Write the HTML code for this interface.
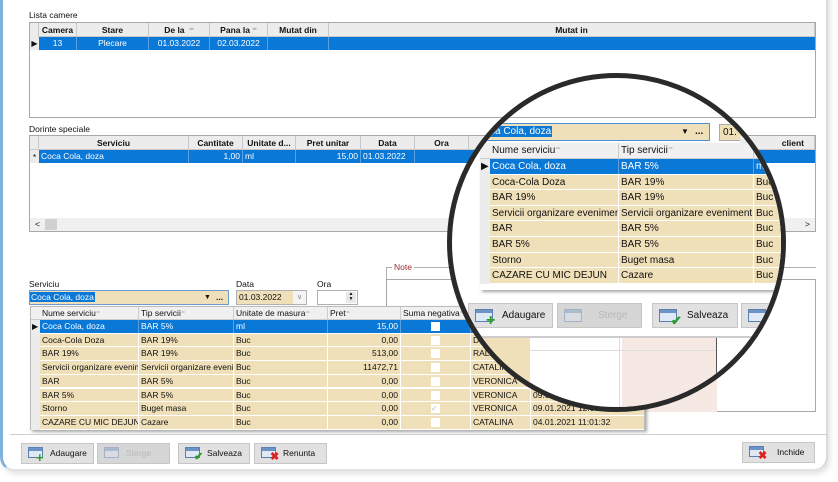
<!DOCTYPE html>
<html><head><meta charset="utf-8"><style>
*{box-sizing:border-box;margin:0;padding:0}
body{width:838px;height:482px;background:#fff;position:relative;overflow:hidden;font-family:"Liberation Sans",sans-serif;font-size:8.5px;color:#111}
.a{position:absolute}
.card{left:0;top:-10px;width:828px;height:481px;border-left:3px solid #7fb0df;border-right:2px solid #dadada;border-bottom:2px solid #e2e2e2;border-radius:0 0 14px 14px;background:#fff;box-shadow:2px 3px 6px rgba(0,0,0,.12)}
.box{border:1px solid #a8a8a8;background:#fff}
.hdr{background:#ececec;border-bottom:1px solid #c8c8c8;height:14px}
.hc{position:absolute;top:0;height:14px;line-height:14px;text-align:center;font-weight:bold;border-right:1px solid #c8c8c8}
.sel{background:#0a78d7;color:#fff}
.c{position:absolute;height:100%;padding:0 2px;white-space:nowrap;overflow:hidden}
.tan{background:#efe0b9}
.btn{position:absolute;background:#e1e1e1;border:1px solid #c6c6c6;height:21px;line-height:19px;font-size:8.5px;padding-left:28px}
.ic{position:absolute;left:6px;top:3px;width:15px;height:11px;border:1px solid #5a7fb0;background:linear-gradient(#6b93c8 0 3px,#dfe9f5 3px)}
.plus{position:absolute;left:14px;top:9px;color:#2a9a2a;font-weight:bold;font-size:13px;line-height:10px}
.x{position:absolute;left:15px;top:8px;color:#d22;font-weight:bold;font-size:11px;line-height:10px}
.chk{position:absolute;left:15px;top:8px;color:#2a9a2a;font-weight:bold;font-size:11px;line-height:10px}
.row{position:absolute;left:0;right:0;border-bottom:1px solid #fff}
.cb{position:absolute;width:9px;height:9px;background:#fff}
</style></head><body>
<div class="a card"></div>

<div class="a" style="left:29px;top:10px">Lista camere</div>
<div class="a box" style="left:29px;top:22px;width:787px;height:96px">
 <div class="hdr a" style="left:0;top:0;width:785px">
  <div class="hc" style="left:0;width:9px;background:#ececec"></div>
  <div class="hc" style="left:9px;width:38px">Camera</div>
  <div class="hc" style="left:47px;width:72px">Stare</div>
  <div class="hc" style="left:119px;width:61px">De la &nbsp;<span style="color:#aaa">⁼</span></div>
  <div class="hc" style="left:180px;width:58px">Pana la <span style="color:#aaa">⁼</span></div>
  <div class="hc" style="left:238px;width:61px">Mutat din</div>
  <div class="hc" style="left:299px;width:486px">Mutat in</div>
 </div>
 <div class="a" style="left:0;top:14px;width:9px;height:13px;background:#ececec;font-size:8px;line-height:13px;text-align:center">▶</div>
 <div class="a sel" style="left:9px;top:14px;width:776px;height:13px;line-height:13px">
  <div class="c" style="left:0;width:38px;text-align:center;border-right:1px solid #5aa0e0">13</div>
  <div class="c" style="left:38px;width:72px;text-align:center;border-right:1px solid #5aa0e0">Plecare</div>
  <div class="c" style="left:110px;width:61px;text-align:center;border-right:1px solid #5aa0e0">01.03.2022</div>
  <div class="c" style="left:171px;width:58px;text-align:center;border-right:1px solid #5aa0e0">02.03.2022</div>
  <div class="c" style="left:229px;width:61px;border-right:1px solid #5aa0e0"></div>
 </div>
</div>

<div class="a" style="left:29px;top:124px">Dorinte speciale</div>
<div class="a box" style="left:29px;top:135px;width:787px;height:97px">
 <div class="hdr a" style="left:0;top:0;width:785px">
  <div class="hc" style="left:0;width:9px"></div>
  <div class="hc" style="left:9px;width:150px">Serviciu</div>
  <div class="hc" style="left:159px;width:54px">Cantitate</div>
  <div class="hc" style="left:213px;width:53px">Unitate d...</div>
  <div class="hc" style="left:266px;width:65px">Pret unitar</div>
  <div class="hc" style="left:331px;width:54px">Data</div>
  <div class="hc" style="left:385px;width:54px">Ora</div>
  <div class="hc" style="left:439px;width:346px;text-align:right;padding-right:10px">client</div>
 </div>
 <div class="a" style="left:0;top:14px;width:9px;height:13px;background:#ececec;line-height:14px;text-align:center">*</div>
 <div class="a sel" style="left:9px;top:14px;width:776px;height:13px;line-height:13px">
  <div class="c" style="left:0;width:150px;border-right:1px solid #5aa0e0">Coca Cola, doza</div>
  <div class="c" style="left:150px;width:54px;text-align:right;border-right:1px solid #5aa0e0">1,00</div>
  <div class="c" style="left:204px;width:53px;border-right:1px solid #5aa0e0">ml</div>
  <div class="c" style="left:257px;width:65px;text-align:right;border-right:1px solid #5aa0e0">15,00</div>
  <div class="c" style="left:322px;width:54px;border-right:1px solid #5aa0e0">01.03.2022</div>
 </div>
 <div class="a" style="left:0;top:82px;width:785px;height:13px;background:#f0f0f0;line-height:13px"><span style="margin-left:5px">&lt;</span><span class="a" style="left:15px;top:1px;width:12px;height:11px;background:#d0d0d0"></span><span class="a" style="right:5px">&gt;</span></div>
</div>

<div class="a" style="left:386px;top:267px;width:430px;height:145px;border:1px solid #b0b0b0;border-bottom:none;border-right:none;background:transparent"></div>
<div class="a" style="left:392px;top:262px;background:#fff;color:#9b2a2a;padding:0 2px">Note</div>
<div class="a box" style="left:386px;top:279px;width:430px;height:133px">
 <div class="a" style="left:236px;top:66px;width:94px;height:66px;background:#f6e8e2"></div>
</div>

<div class="a" style="left:29px;top:279px">Serviciu</div>
<div class="a tan" style="left:29px;top:290px;width:200px;height:15px;border:1px solid #6a9bd1;line-height:13px"><span style="background:#0a78d7;color:#fff;padding:0 1px">Coca Cola, doza</span><span class="a" style="left:174px;font-size:7px">▼</span><span class="a" style="left:186px;font-weight:bold">...</span></div>
<div class="a" style="left:236px;top:279px">Data</div>
<div class="a tan" style="left:236px;top:290px;width:71px;height:15px;border:1px solid #b0b0b0;line-height:13px;padding-left:2px">01.03.2022<span class="a" style="left:56px;top:0;width:13px;height:13px;background:#f4f4f4;color:#888;text-align:center;font-size:7px">∨</span></div>
<div class="a" style="left:317px;top:279px">Ora</div>
<div class="a" style="left:317px;top:290px;width:41px;height:15px;border:1px solid #b0b0b0;background:#fff"><span class="a" style="left:28px;top:1px;width:10px;height:11px;background:#e8e8e8;font-size:5px;text-align:center;line-height:5px">▲<br>▼</span></div>

<div class="a" style="left:30px;top:306px;width:615px;height:124px;background:#fff;box-shadow:2px 2px 3px rgba(0,0,0,.35);border:1px solid #bbb">
 <div class="a" style="left:0;top:0;width:613px;height:13px;background:#f0f0f0;border-bottom:1px solid #ccc;line-height:12px">
  <div class="c" style="left:9px;width:99px;border-right:1px solid #ccc">Nume serviciu<span style="color:#999">⁼</span></div>
  <div class="c" style="left:108px;width:95px;border-right:1px solid #ccc">Tip servicii<span style="color:#999">⁼</span></div>
  <div class="c" style="left:203px;width:94px;border-right:1px solid #ccc">Unitate de masura<span style="color:#999">⁼</span></div>
  <div class="c" style="left:297px;width:73px;border-right:1px solid #ccc">Pret<span style="color:#999">⁼</span></div>
  <div class="c" style="left:370px;width:70px;border-right:1px solid #ccc">Suma negativa<span style="color:#999">⁼</span></div>
 </div>
 <div class="a" style="left:0;top:13px;width:9px;height:110px;background:#ececec"></div>
 <div class="a" style="left:1px;top:15px;font-size:8px">▶</div>
 <div id="rows" class="a" style="left:9px;top:13px;width:604px;height:110px"></div>
</div>

<div class="a" style="left:10px;top:434px;width:818px;height:1px;background:#cfcfcf"></div>

<div class="btn" style="left:21px;top:443px;width:73px"><span class="ic"></span><span class="plus">+</span>Adaugare</div>
<div class="btn" style="left:97px;top:443px;width:73px;background:#d6d6d6;color:#b8b8b8"><span class="ic" style="opacity:.4"></span>Sterge</div>
<div class="btn" style="left:178px;top:443px;width:72px"><span class="ic"></span><span class="chk">✔</span>Salveaza</div>
<div class="btn" style="left:254px;top:443px;width:73px"><span class="ic"></span><span class="x">✖</span>Renunta</div>
<div class="btn" style="left:742px;top:442px;width:73px;padding-left:34px"><span class="ic"></span><span class="x">✖</span>Inchide</div>

<div class="a" style="left:447px;top:73px;width:339px;height:339px;border-radius:50%;border:5px solid #2a2a2a;overflow:hidden;background:#fff">
 <div class="a" style="left:-452px;top:-78px;width:838px;height:482px;font-size:10px">
  <div class="a" style="left:480px;top:60px;width:336px;height:58px;border-right:1px solid #aaa;border-bottom:1px solid #aaa"></div>
  <div class="a tan" style="left:484px;top:123px;width:226px;height:18px;border:1px solid #4a8ed6;line-height:16px"><span style="background:#0a78d7;color:#fff;padding:0 1px;margin-left:4px">ca Cola, doza</span><span class="a" style="left:196px;font-size:8px">▼</span><span class="a" style="left:210px;font-weight:bold">...</span></div>
  <div class="a tan" style="left:719px;top:124px;width:60px;height:17px;border:1px solid #aaa;line-height:15px;padding-left:3px">01.</div>
  <div class="a" style="left:740px;top:136px;width:80px;height:15px;background:#ececec;font-weight:bold;line-height:15px;padding-left:12px">client</div>
  <div class="a" style="left:480px;top:276px;width:340px;height:1px;background:#aaa"></div>
  <div class="a" style="left:480px;top:143px;width:320px;height:147px;background:#fff;box-shadow:2px 2px 3px rgba(0,0,0,.35)">
   <div class="a" style="left:0;top:0;width:320px;height:16px;background:#f0f0f0;border-bottom:1px solid #ccc;line-height:16px">
    <div class="c" style="left:10px;width:129px;border-right:1px solid #ccc">Nume serviciu<span style="color:#999">⁼</span></div>
    <div class="c" style="left:139px;width:135px;border-right:1px solid #ccc">Tip servicii<span style="color:#999">⁼</span></div>
   </div>
   <div class="a" style="left:0;top:16px;width:10px;height:125px;background:#ececec"></div>
   <div class="a" style="left:1px;top:18px;font-size:10px">▶</div>
   <div id="mrows" class="a" style="left:10px;top:16px;width:310px;height:125px"></div>
  </div>
  <div class="btn" style="left:468px;top:303px;width:85px;height:25px;line-height:23px;font-size:10px;padding-left:33px"><span class="ic" style="top:5px;width:18px;height:13px"></span><span class="plus" style="left:17px;top:12px;font-size:16px">+</span>Adaugare</div>
  <div class="btn" style="left:557px;top:303px;width:85px;height:25px;line-height:23px;font-size:10px;padding-left:40px;background:#d6d6d6;color:#b8b8b8"><span class="ic" style="top:5px;width:18px;height:13px;opacity:.4"></span>Sterge</div>
  <div class="btn" style="left:652px;top:303px;width:86px;height:25px;line-height:23px;font-size:10px;padding-left:34px"><span class="ic" style="top:5px;width:18px;height:13px"></span><span class="chk" style="left:18px;top:12px;font-size:13px">✔</span>Salveaza</div>
  <div class="btn" style="left:741px;top:303px;width:86px;height:25px"><span class="ic" style="top:5px;width:18px;height:13px"></span></div>
  <div class="a" style="left:468px;top:336px;width:360px;height:2px;background:#ccc"></div>
  <div class="a" style="left:470px;top:338px;width:60px;height:80px;background:#efe0b9;font-size:8.5px;line-height:13px;padding:8px 0 0 3px">D<br>RAL<br>CATALI<br>VERONICA<br>VERONICA<br>VERONICA</div>
  <div class="a" style="left:530px;top:338px;width:90px;height:80px;border-right:1px solid #ddd"></div>
  <div class="a" style="left:622px;top:338px;width:94px;height:80px;background:#f6e8e2"></div>
  <div class="a" style="left:716px;top:338px;width:1px;height:80px;background:#555"></div>
  <div class="a" style="left:530px;top:350px;width:186px;height:1px;background:#ddd"></div>
 </div>
</div>

<script>
var d=[["Coca Cola, doza","BAR 5%","ml","15,00",""],["Coca-Cola Doza","BAR 19%","Buc","0,00","D"],["BAR 19%","BAR 19%","Buc","513,00","RALI"],["Servicii organizare eveniment","Servicii organizare eveniment","Buc","11472,71","CATALINA"],["BAR","BAR 5%","Buc","0,00","VERONICA"],["BAR 5%","BAR 5%","Buc","0,00","VERONICA"],["Storno","Buget masa","Buc","0,00","VERONICA"],["CAZARE CU MIC DEJUN","Cazare","Buc","0,00","CATALINA"]];
var dt=["","","","","","09.01.2021 12:00","09.01.2021 12:00","04.01.2021 11:01:32"];
var h="",m="";
d.forEach(function(r,i){
 var s=i==0?"sel":"tan",t=(i*13.7).toFixed(1);
 var br=i==0?"#5aa0e0":"#fff";
 h+='<div class="row '+s+'" style="top:'+t+'px;height:13.7px;line-height:13px">'+
 '<div class="c" style="left:0;width:99px;border-right:1px solid '+br+'">'+r[0]+'</div>'+
 '<div class="c" style="left:99px;width:95px;border-right:1px solid '+br+'">'+r[1]+'</div>'+
 '<div class="c" style="left:194px;width:94px;border-right:1px solid '+br+'">'+r[2]+'</div>'+
 '<div class="c" style="left:288px;width:73px;text-align:right;border-right:1px solid '+br+'">'+r[3]+'</div>'+
 '<div class="c" style="left:361px;width:70px;border-right:1px solid '+br+'"><span class="cb" style="left:30px;top:2px;color:#bbb;font-size:8px;line-height:9px">'+(i==6?'✓':'')+'</span></div>'+
 '<div class="c" style="left:431px;width:60px;border-right:1px solid '+br+'">'+r[4]+'</div>'+
 '<div class="c" style="left:491px;width:113px">'+dt[i]+'</div></div>';
 var mt=(i*15.6).toFixed(1),mbr=i==0?"#5aa0e0":"#fff";
 m+='<div class="row '+s+'" style="top:'+mt+'px;height:15.6px;line-height:15px">'+
 '<div class="c" style="left:0;width:129px;border-right:1px solid '+mbr+'">'+r[0]+'</div>'+
 '<div class="c" style="left:129px;width:135px;border-right:1px solid '+mbr+'">'+r[1]+'</div>'+
 '<div class="c" style="left:264px;width:46px">'+(i==0?'ml':'Buc')+'</div></div>';
});
document.getElementById("rows").innerHTML=h;
document.getElementById("mrows").innerHTML=m;
</script>
</body></html>
